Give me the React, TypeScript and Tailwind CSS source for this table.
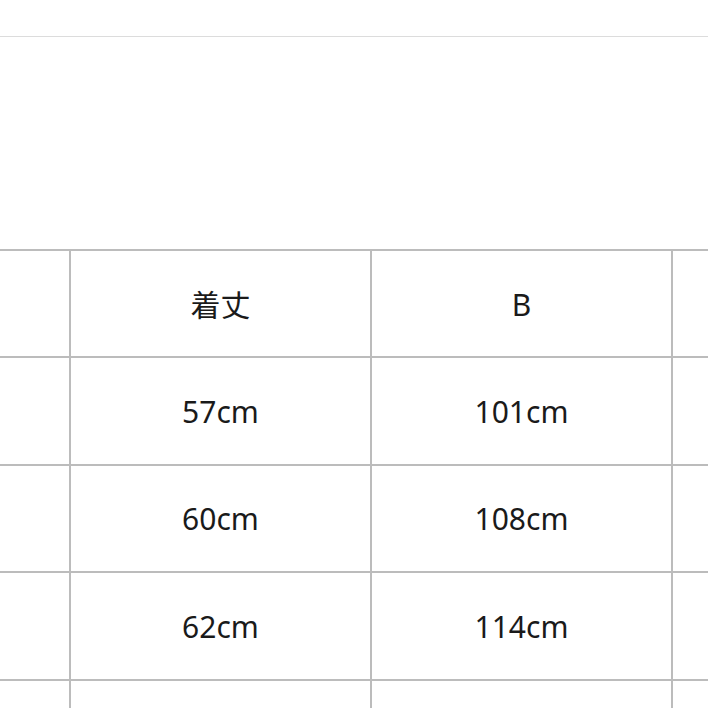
import React from "react";

const rows: string[][] = [
  ["", "着丈", "B"],
  ["", "57cm", "101cm"],
  ["", "60cm", "108cm"],
  ["", "62cm", "114cm"],
  ["", "", ""],
];

export default function App() {
  return (
    <div
      className="w-[708px] h-[708px] overflow-hidden bg-white text-[#1a1a1a]"
      style={{ fontFamily: '"Noto Sans", "Noto Sans CJK JP", sans-serif' }}
    >
      <div className="h-[36px]" />
      <div className="h-px bg-[#dcdcdc]" />
      <div className="h-[212px]" />
      <div className="flex flex-col">
        {rows.map((r, i) => (
          <div
            key={i}
            className="flex h-[107.4px] shrink-0 border-t-2 border-[#bcbcbc] box-border"
          >
            <div className="w-[69px] shrink-0" />
            <div className="w-[301px] shrink-0 border-l-2 border-[#bcbcbc] flex items-center justify-center text-[30px] leading-none pt-[2px]">
              {r[1]}
            </div>
            <div className="w-[301px] shrink-0 border-l-2 border-[#bcbcbc] flex items-center justify-center text-[30px] leading-none pt-[2px]">
              {r[2]}
            </div>
            <div className="w-[301px] shrink-0 border-l-2 border-[#bcbcbc]" />
          </div>
        ))}
      </div>
    </div>
  );
}
